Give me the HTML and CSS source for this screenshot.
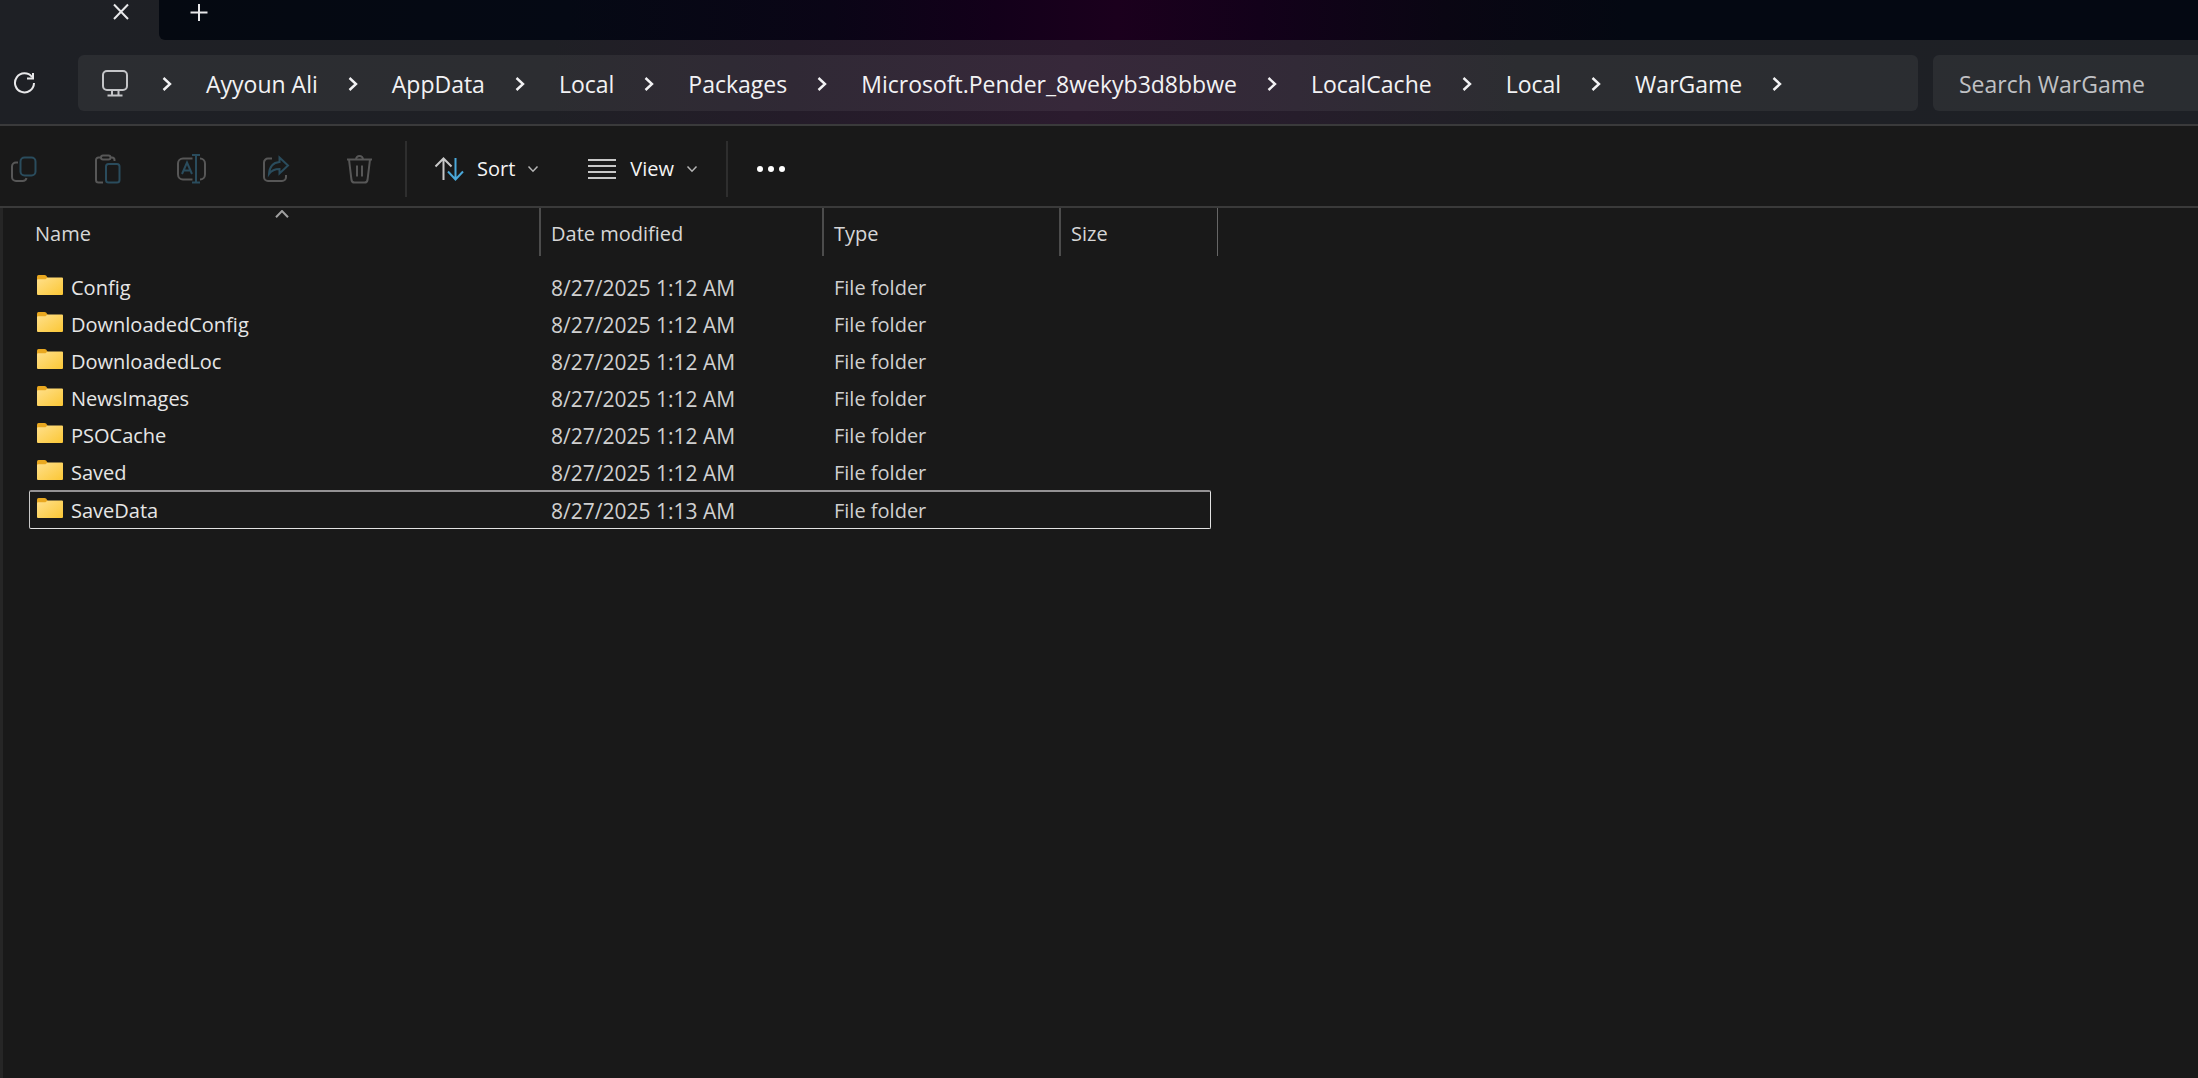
FILE: index.html
```html
<!DOCTYPE html>
<html lang="en">
<head>
    <meta charset="UTF-8">
    <meta name="viewport" content="width=device-width, initial-scale=1.0">
    <title>WarGame</title>
    <link rel="stylesheet" href="styles.css">
</head>
<body>
    <svg class="sprite" width="0" height="0" aria-hidden="true">
        <defs>
            <linearGradient id="folder-fill" x1="0" y1="0" x2="1" y2="1">
                <stop offset="0" stop-color="#ffe08c"/>
                <stop offset="1" stop-color="#fbc735"/>
            </linearGradient>
        </defs>
        <symbol id="chevron" viewBox="0 0 10 16">
            <path d="M1.5 2 8 8l-6.5 6" fill="none" stroke="currentColor" stroke-width="2.4"/>
        </symbol>
        <symbol id="arrow-down" viewBox="0 0 12 8">
            <path d="M1.5 1.5 6 6.2l4.5-4.7" fill="none" stroke="currentColor" stroke-width="1.5"/>
        </symbol>
        <symbol id="folder" viewBox="0 0 26 20">
            <path d="M0 1.5Q0 0 1.5 0h6q1 0 1.6.6L10.500 2.500V5H0z" fill="#e9a820"/>
            <path d="M0 5.200q0-1 1-1h7.500L10.500 2.400H25q1 0 1 1V19q0 1-1 1H1q-1 0-1-1z" fill="url(#folder-fill)"/>
        </symbol>
    </svg>

    <header class="titlebar">
        <div class="tabs">
            <div class="tab">
                <button class="icon-btn" type="button" aria-label="Close tab">
                    <svg width="20" height="20" viewBox="0 0 20 20"><path d="M3 2.5 17 17M17 2.5 3 17"/></svg>
                </button>
            </div>
            <div class="strip">
                <button class="icon-btn" type="button" aria-label="New tab">
                    <svg width="20" height="20" viewBox="0 0 20 20"><path d="M10 2v17M1.500 10.500h17"/></svg>
                </button>
            </div>
        </div>

        <div class="location">
            <button class="icon-btn refresh" type="button" aria-label="Refresh">
                <svg width="24" height="24" viewBox="0 0 24 24"><path d="M19 6A9.500 9.500 0 1 0 21 12M20 2v5.500h-6"/></svg>
            </button>
            <nav class="address">
                <ul>
                    <li>
                        <a href="#" aria-label="This PC"><svg class="pc" width="32" height="32" viewBox="0 0 32 32"><rect x="3" y="3" width="24" height="19" rx="4"/><path d="M12 22v5M18.500 22v5M7.500 27.500h15"/></svg></a>
                        <svg class="chevron"><use href="#chevron"/></svg>
                    </li>
                    <li><a href="#">Ayyoun Ali</a><svg class="chevron"><use href="#chevron"/></svg></li>
                    <li><a href="#">AppData</a><svg class="chevron"><use href="#chevron"/></svg></li>
                    <li><a href="#">Local</a><svg class="chevron"><use href="#chevron"/></svg></li>
                    <li><a href="#">Packages</a><svg class="chevron"><use href="#chevron"/></svg></li>
                    <li><a href="#">Microsoft.Pender_8wekyb3d8bbwe</a><svg class="chevron"><use href="#chevron"/></svg></li>
                    <li><a href="#">LocalCache</a><svg class="chevron"><use href="#chevron"/></svg></li>
                    <li><a href="#">Local</a><svg class="chevron"><use href="#chevron"/></svg></li>
                    <li><a href="#">WarGame</a><svg class="chevron"><use href="#chevron"/></svg></li>
                </ul>
            </nav>
            <input class="search" type="search" placeholder="Search WarGame" aria-label="Search WarGame">
        </div>
    </header>

    <div class="toolbar">
        <div class="actions">
            <button type="button" aria-label="Copy" disabled>
                <svg width="32" height="32" viewBox="0 0 32 32">
                    <path d="M10 9.500H8a4 4 0 0 0-4 4V24a4 4 0 0 0 4 4h6.500a4 4 0 0 0 4-3"/>
                    <rect class="blue" x="12.500" y="4.500" width="15" height="18" rx="4"/>
                </svg>
            </button>
            <button type="button" aria-label="Paste" disabled>
                <svg width="32" height="32" viewBox="0 0 32 32">
                    <path d="M9 4.500H6.500A2.500 2.500 0 0 0 4 7v20A2.500 2.500 0 0 0 6.500 29.500H11M18 4.500h2a2.500 2.500 0 0 1 2.500 2.500V8"/>
                    <rect x="9" y="2.500" width="9.500" height="4" rx="2"/>
                    <rect class="blue" x="14" y="11" width="13.500" height="18.500" rx="2.500"/>
                </svg>
            </button>
            <button type="button" aria-label="Rename" disabled>
                <svg width="32" height="32" viewBox="0 0 32 32">
                    <path d="M16.500 5.500H7a5 5 0 0 0-5 5v11a5 5 0 0 0 5 5h9.500M24 5.500a5 5 0 0 1 5 5v11a5 5 0 0 1-5 5"/>
                    <path class="blue" d="M20 2v27.500M16 2h8M16 29.500h8M6 21l5-11.500L16 21M7.800 17.500h6.400"/>
                </svg>
            </button>
            <button type="button" aria-label="Share" disabled>
                <svg width="32" height="32" viewBox="0 0 32 32">
                    <path d="M12 5.500H8a4 4 0 0 0-4 4V24a4 4 0 0 0 4 4h14a4 4 0 0 0 4-4v-2"/>
                    <path class="blue" d="M19.500 4.500l8.500 8-8.500 8V16c-5 0-8 1.500-10.500 5C9.500 13.500 13 9.500 19.500 9z"/>
                </svg>
            </button>
            <button type="button" aria-label="Delete" disabled>
                <svg width="32" height="32" viewBox="0 0 32 32">
                    <path d="M3 6.500h25M12 6.500a3.500 3.500 0 0 1 7 0M5 6.500l2.500 20.500A3 3 0 0 0 10.500 29.500h10a3 3 0 0 0 3-2.500L26 6.500M13 12.500v11M18 12.500v11"/>
                </svg>
            </button>
        </div>

        <div class="menus">
            <button type="button">
                <svg class="sort" width="32" height="32" viewBox="0 0 32 32">
                    <path d="M10.500 27V6M2.500 13.500l8-8 8 8"/>
                    <path class="blue" d="M22.500 5v21M15 18.500l7.500 8 7.500-8"/>
                </svg>
                Sort
                <svg class="arrow"><use href="#arrow-down"/></svg>
            </button>
            <button type="button">
                <svg width="32" height="32" viewBox="0 0 32 32"><path d="M2 7h28M2 13h28M2 19h28M2 25h28"/></svg>
                View
                <svg class="arrow"><use href="#arrow-down"/></svg>
            </button>
        </div>

        <button class="more" type="button" aria-label="See more">
            <svg width="30" height="8" viewBox="0 0 30 8"><circle cx="4" cy="4" r="3"/><circle cx="15" cy="4" r="3"/><circle cx="26" cy="4" r="3"/></svg>
        </button>
    </div>

    <main class="content">
        <table class="files">
            <colgroup>
                <col class="col-name">
                <col class="col-date">
                <col class="col-type">
                <col class="col-size">
                <col class="col-edge">
            </colgroup>
            <thead>
                <tr>
                    <th>
                        <button type="button">Name</button>
                        <svg class="sorted" width="14" height="8" viewBox="0 0 14 8"><path d="M1 7.200 7 1l6 6.200"/></svg>
                    </th>
                    <th><button type="button">Date modified</button></th>
                    <th><button type="button">Type</button></th>
                    <th colspan="2"><button type="button">Size</button></th>
                </tr>
            </thead>
            <tbody>
                <tr>
                    <td><svg class="folder"><use href="#folder"/></svg>Config</td>
                    <td class="date">8/27/2025 1:12 AM</td>
                    <td>File folder</td>
                    <td></td>
                </tr>
                <tr>
                    <td><svg class="folder"><use href="#folder"/></svg>DownloadedConfig</td>
                    <td class="date">8/27/2025 1:12 AM</td>
                    <td>File folder</td>
                    <td></td>
                </tr>
                <tr>
                    <td><svg class="folder"><use href="#folder"/></svg>DownloadedLoc</td>
                    <td class="date">8/27/2025 1:12 AM</td>
                    <td>File folder</td>
                    <td></td>
                </tr>
                <tr>
                    <td><svg class="folder"><use href="#folder"/></svg>NewsImages</td>
                    <td class="date">8/27/2025 1:12 AM</td>
                    <td>File folder</td>
                    <td></td>
                </tr>
                <tr>
                    <td><svg class="folder"><use href="#folder"/></svg>PSOCache</td>
                    <td class="date">8/27/2025 1:12 AM</td>
                    <td>File folder</td>
                    <td></td>
                </tr>
                <tr>
                    <td><svg class="folder"><use href="#folder"/></svg>Saved</td>
                    <td class="date">8/27/2025 1:12 AM</td>
                    <td>File folder</td>
                    <td></td>
                </tr>
                <tr class="focused">
                    <td><svg class="folder"><use href="#folder"/></svg>SaveData</td>
                    <td class="date">8/27/2025 1:13 AM</td>
                    <td>File folder</td>
                    <td></td>
                </tr>
            </tbody>
        </table>
    </main>
</body>
</html>
```

FILE: styles.css
```css
* { box-sizing: border-box; }
body { margin: 0; min-height: 100vh; display: flex; flex-direction: column; background: #191919; color: #e0e0e0; font-family: "Segoe UI", "Open Sans", "Noto Sans", sans-serif; font-size: 20px; }
button { margin: 0; padding: 0; border: none; background: none; color: inherit; font: inherit; cursor: pointer; }
button:disabled { cursor: default; }
svg { flex: none; }
.sprite { position: absolute; }

/* title bar: tabs and address */
.titlebar { background: linear-gradient(90deg, #1e2025 0%, #1f2025 25%, #241c29 36%, #2b1b2e 49%, #261d2b 59%, #1f2025 69%, #1d2025 100%); border-bottom: 2px solid #3a3a3b; }
.tabs { display: flex; height: 40px; }
.tab { width: 159px; padding: 2px 28px 0 0; display: flex; justify-content: flex-end; align-items: flex-start; }
.strip { flex: 1; padding: 2px 0 0 30px; display: flex; align-items: flex-start; border-bottom-left-radius: 6px; background: linear-gradient(90deg, #050911 0%, #050914 20%, #0a0516 33%, #13001a 41%, #1b001d 47%, #13011a 54%, #0a0613 63%, #040812 72%, #040812 100%); }
.icon-btn { display: flex; color: #e8e8ea; }
.icon-btn svg { fill: none; stroke: currentColor; stroke-width: 2; }
.location { display: flex; align-items: center; height: 84px; padding: 2px 0 0 13px; }
.refresh { width: 65px; }
.address { flex: 1; height: 56px; margin-right: 15px; padding: 2px 0 0 22px; display: flex; align-items: center; border-radius: 6px; background: rgba(255, 255, 255, 0.06); overflow: hidden; }
.address ul { display: flex; margin: 0; padding: 0; list-style: none; }
.address li { display: flex; align-items: center; }
.address a { color: #f2f2f4; font-size: 23px; line-height: 32px; text-decoration: none; white-space: nowrap; }
.pc { display: block; fill: none; stroke: #c4c5c8; stroke-width: 2; }
.chevron { width: 10px; height: 16px; margin: 0 34px 0 30px; color: #f2f2f4; }
.search { width: 265px; height: 56px; padding: 2px 0 0 26px; border: none; border-radius: 6px 0 0 6px; background: rgba(255, 255, 255, 0.06); color: #f2f2f4; font: inherit; font-size: 23px; }
.search::placeholder { color: #c0c1c4; opacity: 1; }

/* command bar */
.toolbar { display: flex; align-items: center; height: 82px; padding: 5px 0 0 8px; border-bottom: 2px solid #3a3a3a; color: #f4f4f4; }
.toolbar svg { fill: none; stroke: currentColor; stroke-width: 2; }
.toolbar button { display: flex; align-items: center; gap: 12px; }
.actions, .menus { display: flex; align-items: center; height: 56px; border-right: 2px solid #2e2e2e; }
.actions { gap: 52px; padding-right: 29px; }
.actions button { color: #575757; }
.actions .blue { stroke: #2a4c5d; }
.menus { gap: 47px; padding: 0 28px 0 26px; }
.menus svg { stroke: #c8c8c8; }
.menus .blue { stroke: #4aa8da; }
.menus .arrow { width: 12px; height: 8px; color: #b5b5b5; }
.more { padding: 0 28px; }
.toolbar .more svg { fill: #fff; stroke: none; }

/* file list */
.content { flex: 1; padding-left: 26px; border-left: 3px solid #262626; }
.files { table-layout: fixed; width: 1189px; border-collapse: separate; border-spacing: 0; text-align: left; }
.col-name { width: 512px; }
.col-date { width: 283px; }
.col-type { width: 237px; }
.col-size { width: 150px; }
.col-edge { width: 7px; }
.files th { position: relative; height: 48px; padding: 2px 0 0 10px; border-right: 2px solid #4c4c4c; font-weight: normal; color: #d6d6d6; }
.files th:first-child { padding-left: 6px; }
.files th:last-child { border-right: 1px solid #666; }
.sorted { position: absolute; top: 2px; left: 246px; fill: none; stroke: #a0a0a0; stroke-width: 2; }
.files td { height: 37px; padding: 2px 0 0 10px; line-height: 28px; color: #d0d0d0; white-space: nowrap; }
.files td:first-child { padding-left: 8px; color: #e6e6e6; }
.files .date { font-size: 21px; }
.files tbody::before { content: ""; display: block; height: 12px; }
.folder { width: 26px; height: 20px; margin-right: 8px; }
.files .focused td { height: 39px; border-top: 2px solid #949294; border-bottom: 1px solid #e2e2e2; }
.files .focused td:first-child { padding-left: 7px; border-left: 1px solid #c8c8c8; border-radius: 2px 0 0 2px; }
.files .focused td:last-child { border-right: 1px solid #e2e2e2; border-radius: 0 2px 2px 0; }
```
